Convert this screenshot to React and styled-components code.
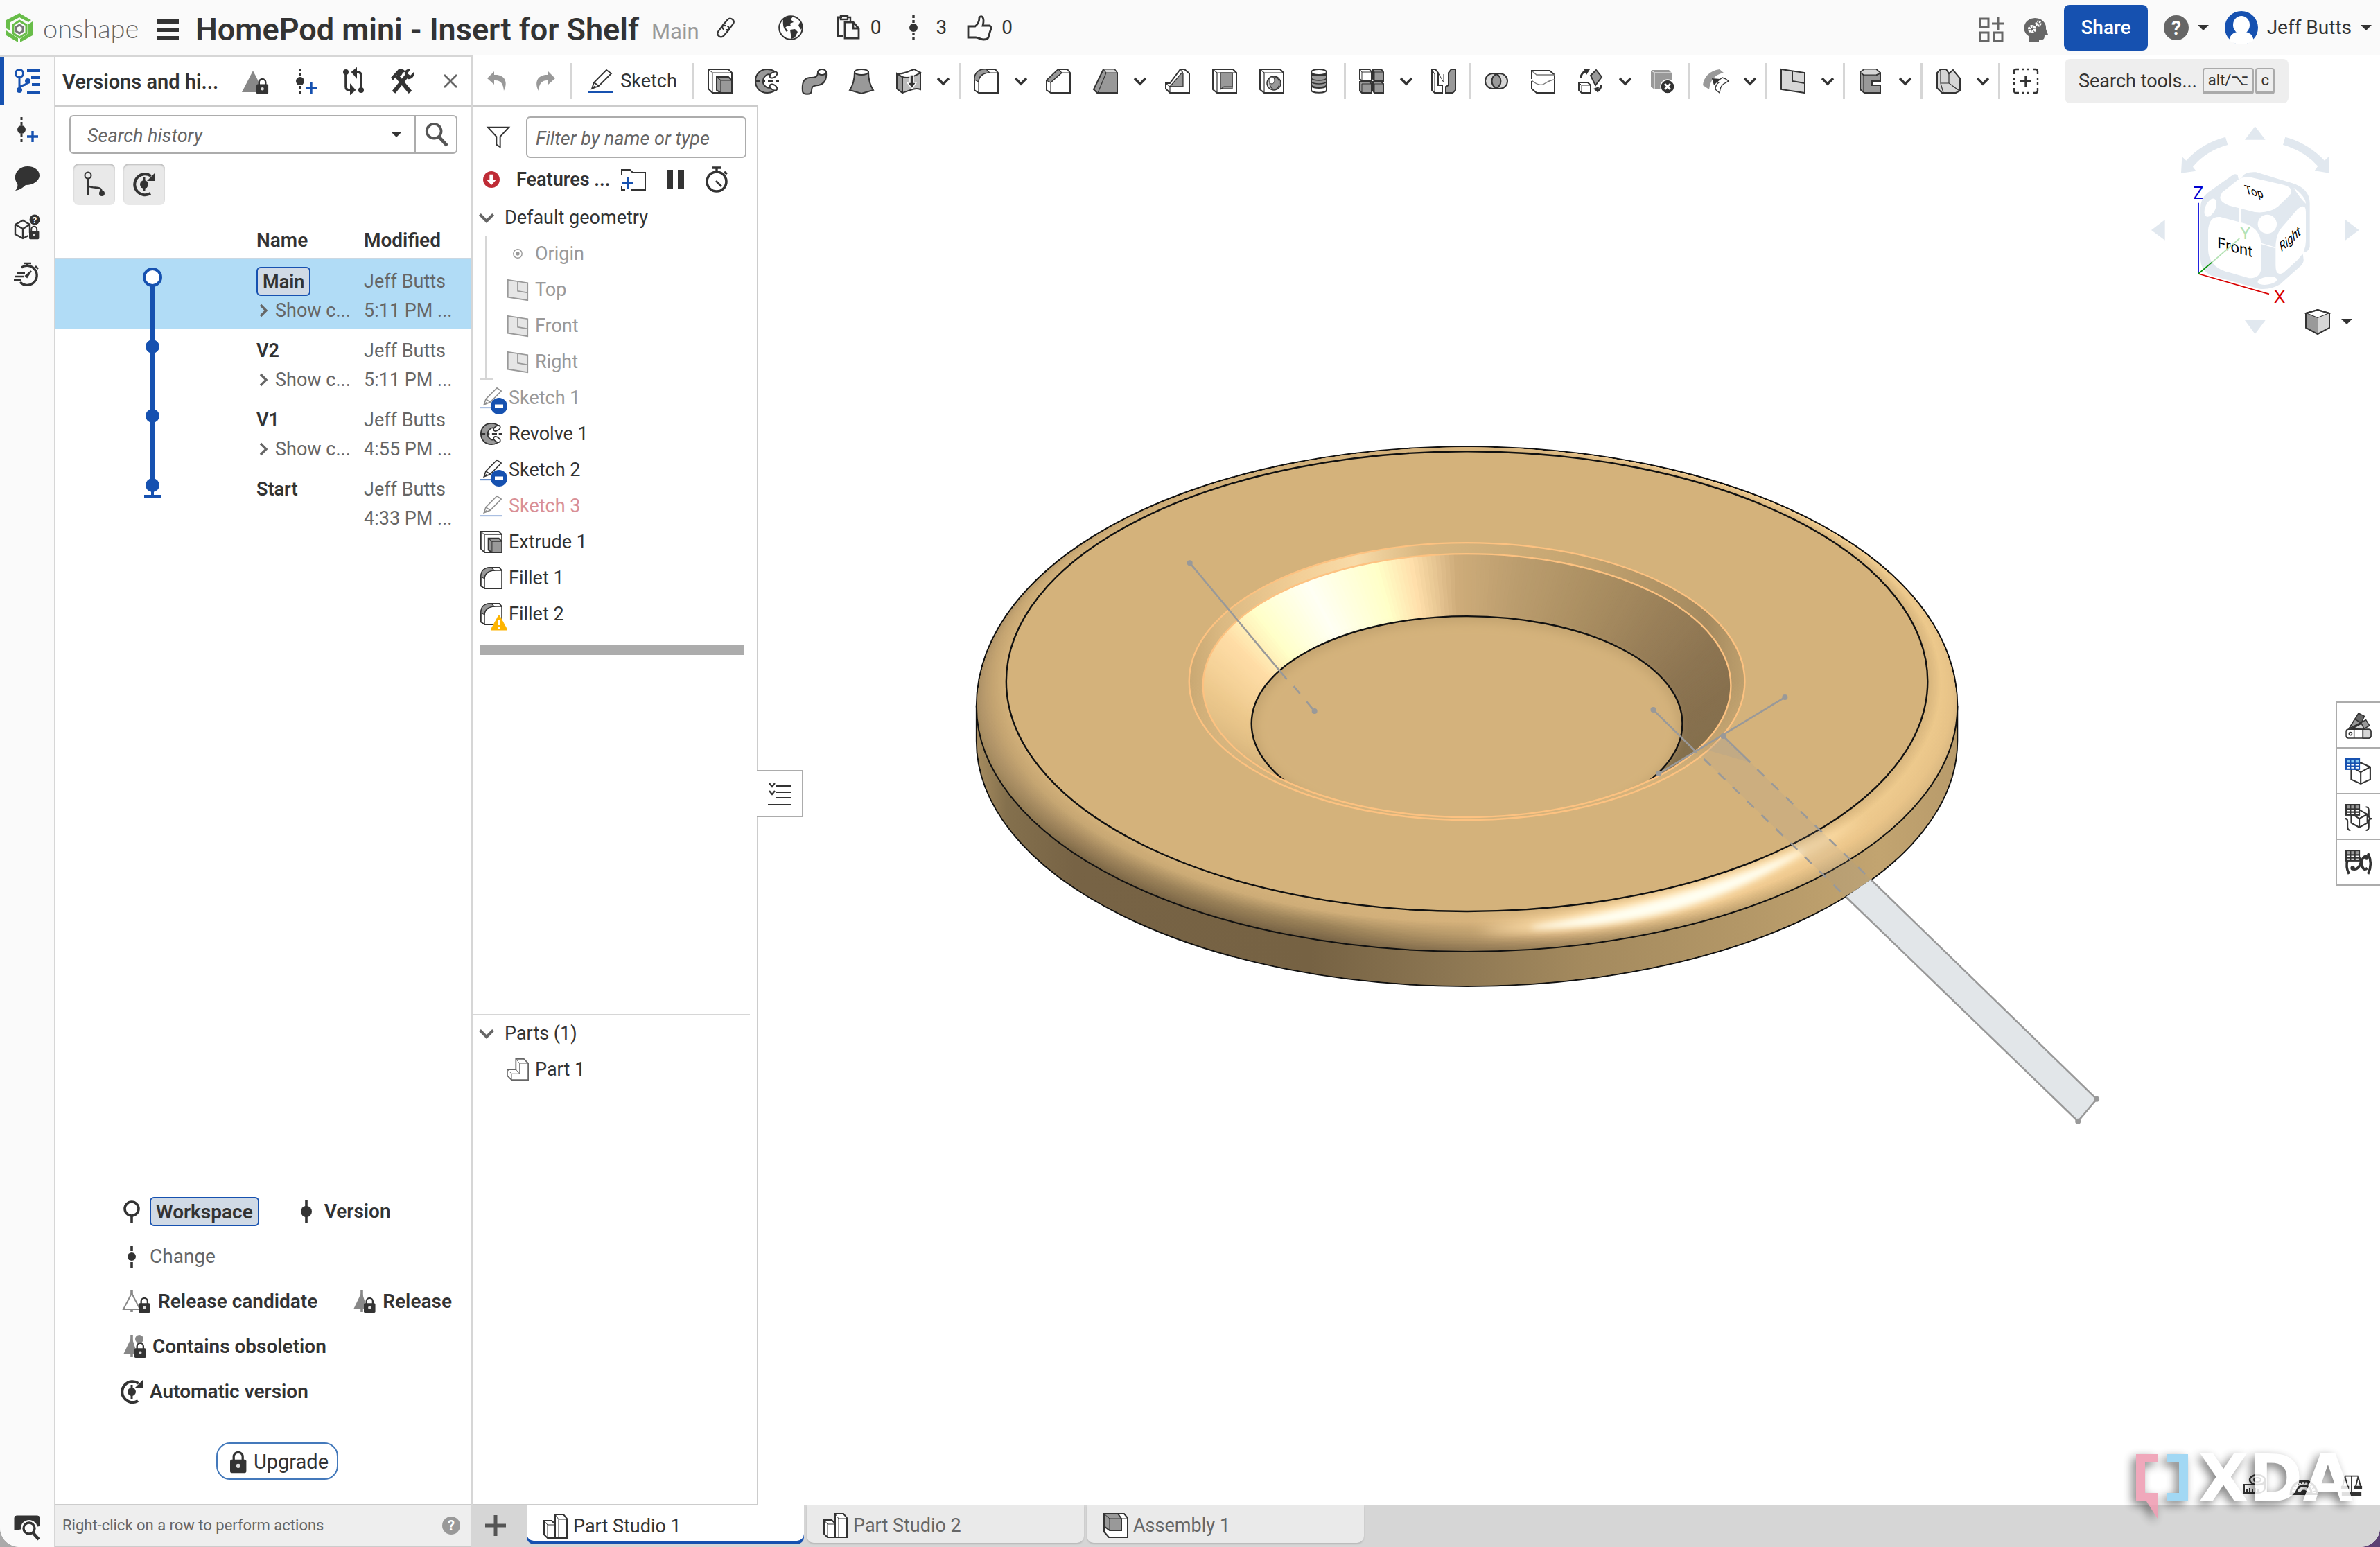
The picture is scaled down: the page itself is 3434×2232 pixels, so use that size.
import React, { useState } from 'react'
import styled, { createGlobalStyle } from 'styled-components'

const ink = '#333'
const blue = '#1651b0'

const lock = (x, y, s = 1) => (
  <g transform={`translate(${x} ${y}) scale(${s})`} stroke="none">
    <path d="M4 10V6a5 5 0 0 1 10 0v4" fill="none" stroke={ink} strokeWidth="2.5" />
    <rect x="0" y="9" width="18" height="15" rx="2" fill={ink} />
    <circle cx="9" cy="16" r="2.4" fill="#ddd" />
  </g>
)

const grid = (color, head) => (
  <g stroke="none">
    <rect x="0" y="0" width="20" height="16" fill={color} />
    {[2, 8, 14].map((x) => <rect key={x} x={x} y="2" width="4" height="4" fill={head} />)}
    {[2, 8, 14].map((x) => <path key={x} d={`M${x} 8h4v2h-4zM${x} 12h4v2h-4z`} fill="#fff" />)}
  </g>
)

// every drawing uses a 36 x 36 box
const icons = {
  extrude: <><path d="M1 1h29l5 5v29H7l-6-6z" fill="#fff" /><path d="M1 1l6 5h28M7 6v29" strokeWidth="1" /><path d="M13 12h17l5 5v18H19l-6-4z" fill="#999" /><path d="M13 12l6 5h16M19 17v18" strokeWidth="1.2" /></>,
  revolve: <><path d="M32 8C29 3 23 1 18 1 8 1 1 8 1 18s7 17 17 17c5 0 11-2 14-7-2-4-6-3-9-1-2 1-5 1-7-1-6-4-5-12 0-16 2-2 5-2 7-1 4 3 8 2 9-1z" fill="#999" /><ellipse cx="27" cy="9" rx="6" ry="3.6" transform="rotate(-35 27 9)" fill="#fff" /><ellipse cx="27" cy="27" rx="6" ry="3.6" transform="rotate(35 27 27)" fill="#fff" /><path d="M0 18h8M12 18h3M19 18h8M30 18h5" strokeWidth="2" /></>,
  sweep: <><path d="M1 33c-1-12 1-19 10-20 9 0 12-1 12-8l12 0c1 10-2 17-11 19-8 1-10 1-10 9-1 5-12 5-13 0z" fill="#999" /><ellipse cx="29" cy="5" rx="6" ry="4" fill="#fff" /></>,
  loft: <><path d="M8 5C8 18 5 25 1 31l17 5 17-5c-4-6-7-13-7-26z" fill="#999" /><ellipse cx="18" cy="5" rx="10" ry="4" fill="#fff" /></>,
  thicken: <><path d="M1 7l8 5v23l-8-6z" fill="#999" /><path d="M9 12c8 3 16-1 26-6v24c-9-3-16 2-26 5z" fill="#bbb" /><path d="M1 7C9 9 17 4 26 1l9 5c-9 5-17 9-26 6z" fill="#fff" /><path d="M20 9h5v11h4l-6 9-7-9h4z" fill={ink} stroke="#fff" strokeWidth="1.5" /></>,
  fillet: <><path d="M7 35l-6-4V16C1 6 7 1 16 1h15l4 5v29z" fill="#fff" /><path d="M1 16C1 6 7 1 16 1h2l5 5c-9 0-16 6-16 13z" fill="#999" strokeWidth="1.2" /><path d="M7 35V19C7 10 13 6 23 6h12" strokeWidth="1.2" /></>,
  chamfer: <><path d="M7 35l-6-4V17L18 1h13l4 5v29z" fill="#fff" /><path d="M1 17L18 1l5 5L7 20z" fill="#999" strokeWidth="1.2" /><path d="M7 35V20L23 6h12" strokeWidth="1.2" /></>,
  draft: <><path d="M1 30L15 1h16l4 5v29H6z" fill="#999" /><path d="M15 1h16l4 5H19z" fill="#d6d6d6" strokeWidth="1.2" /><path d="M19 6L7 35" strokeWidth="1.2" /></>,
  rib: <><path d="M1 21h6L22 1h6l7 6v28H7l-6-6z" fill="#fff" /><path d="M7 26L25 5v21z" fill="#999" strokeWidth="1.2" /><path d="M22 1l4 6v19H7v9M1 21l6 5" strokeWidth="1.2" /></>,
  shell: <><path d="M1 1h29l5 5v29H7l-6-5z" fill="#fff" /><path d="M12 6h17v23H12z" fill="#999" strokeWidth="1.2" /><path d="M29 6v20l-12 0-5 4M1 1l6 5v29M7 6h28" strokeWidth="1.2" /></>,
  hole: <><path d="M1 1h29l5 5v29H7l-6-5z" fill="#fff" /><path d="M1 1l6 5h28M7 6v29" strokeWidth="1.2" /><ellipse cx="21" cy="21" rx="10" ry="10" fill="#d6d6d6" strokeWidth="1.5" /><ellipse cx="22" cy="21" rx="7" ry="9" fill="#999" strokeWidth="1.2" /><ellipse cx="18" cy="17" rx="4" ry="5" fill="#fff" strokeWidth="1" /></>,
  thread: <><path d="M7 5v26c0 5 22 5 22 0V5z" fill="#fff" /><path d="M7 9v16c4 4 18 4 22 0V9z" fill="#999" /><path d="M7 14c4 4 18 4 22 0M7 19c4 4 18 4 22 0M7 24c4 4 18 4 22 0" strokeWidth="1.4" /><ellipse cx="18" cy="5" rx="11" ry="4" fill="#fff" /></>,
  pattern: <><path d="M1 1h14l3 4v13H4l-3-3z" fill="#fff" /><path d="M20 1h12l3 4v13H22l-2-3zM1 19h14l3 3v13H4l-3-3zM20 19h12l3 3v13H22l-2-3z" fill="#999" /><path d="M1 1l3 4h14M4 5v12M20 1l2 4h13M22 5v12M4 22h14M22 22h13M4 22v12M22 22v12" strokeWidth="1" /></>,
  mirror: <><path d="M1 1h5l4 5v18h6v11H5l-4-4z" fill="#fff" /><path d="M35 1h-6l-4 5v18l-4 2v9h10l4-4z" fill="#999" /><path d="M10 6l8 14V8M5 35V8L1 1" strokeWidth="1" /></>,
  boolean: <><circle cx="13" cy="18" r="11" fill="#d6d6d6" /><circle cx="23" cy="18" r="11" fill="#d6d6d6" /><path d="M18 8a11 11 0 0 1 0 20 11 11 0 0 1 0-20z" fill="#999" /></>,
  split: <><path d="M1 15V3h26l7 6v26H8l-7-6V18" fill="#fff" /><path d="M1 3l7 6h26M1 17c7 6 13 8 18 5s9-6 16-6" stroke="#777" strokeWidth="1.4" /></>,
  transform: <><path d="M18 10L26 2l8 10-9 12z" fill="#999" /><path d="M1 20h13l4 4v11H5l-4-4z" fill="#fff" /><path d="M1 20l4 4h13M5 24v11" strokeWidth="1" /><path d="M4 14C4 8 7 5 11 4M33 24c0 4-2 7-6 8" strokeWidth="3" /><path d="M8 0l9 1-5 8zM22 29l8-3-1 9z" fill={ink} stroke="none" /></>,
  remove: <><path d="M1 2h26l4 4v24H6l-5-4z" fill="#999" stroke="none" /><path d="M1 2l5 4h25M6 6v24" stroke="#fff" strokeWidth="1" /><circle cx="25" cy="26" r="10" fill={ink} stroke="#fff" strokeWidth="1.4" /><path d="M21 22l8 8M29 22l-8 8" stroke="#fff" strokeWidth="2.6" /></>,
  modify: <><path d="M0 24C1 12 10 3 24 1l6 5C17 9 11 16 9 30z" fill="#999" stroke="none" /><path d="M20 19l8-6c4 1 6 2 9 5l-7 4c-4 3-5 6-6 13l-6-5c0-5 2-8 5-10z" fill="#fff" strokeWidth="1.4" /><path d="M13 14l12 1-9 9z" fill={ink} stroke="none" /></>,
  plane: <><path d="M1 1l34 5v29L1 30z" fill="#d6d6d6" /><path d="M17 3v15l18 3" /></>,
  frame: <><path d="M3 5l6-4h17l6 5v12h-12v6h12v11H9l-6-5z" fill="#999" /><path d="M3 5l5 5h18l6-3M9 1l-6 4M8 10v24" fill="none" strokeWidth="1.2" /><path d="M3 5l6-4h17l6 5-6 3H8z" fill="#d6d6d6" strokeWidth="1.2" /></>,
  sheet: <><path d="M2 6l5-5h8l4 6 6-5 10 12v18l-6 3H9l-7-7z" fill="#d6d6d6" /><path d="M19 7v14l15 11M7 1v20L19 21M7 21l4 14" strokeWidth="1.2" /></>,
  addTool: <><path d="M1 8V4q0-3 3-3h4M28 1h4q3 0 3 3v4M35 28v4q0 3-3 3h-4M8 35H4q-3 0-3-3v-4M13 1h3M20 1h3M13 35h3M20 35h3M1 13v3M1 20v3M35 13v3M35 20v3" strokeWidth="2.4" /><path d="M18 10v16M10 18h16" strokeWidth="3.4" /></>,
  sketch: <><path d="M6 29L9 20 27 2l7 5L16 25 6 29zM9 20l7 5M6 29l5-4" fill="#fff" strokeWidth="1.8" /><path d="M0 34h36" stroke={blue} strokeWidth="2" /></>,
  sketchDim: <g opacity=".55"><path d="M6 29L9 20 27 2l7 5L16 25 6 29zM9 20l7 5M6 29l5-4" fill="#fff" strokeWidth="1.8" /><path d="M0 34h36" stroke={blue} strokeWidth="2" /></g>,
  undo: <path d="M13 4L3 14l10 9v-6c9-1 13 4 14 15 7-14 0-24-14-23z" fill="#999" stroke="none" />,
  redo: <path d="M23 4l10 10-10 9v-6C14 16 10 21 9 32 2 18 9 8 23 9z" fill="#999" stroke="none" />,
  origin: <><circle cx="18" cy="18" r="7" stroke="#999" strokeWidth="1.6" /><circle cx="18" cy="18" r="3" fill="#999" stroke="none" /></>,
  planeDim: <g stroke="#999"><path d="M2 2l32 5v28L2 30z" fill="#e6e6e6" /><path d="M18 5v15l16 3" /></g>,
  part: <><path d="M1 18h14V1h13l7 7v27H8l-7-7z" fill="#fff" stroke="#666" /><path d="M15 1l6 7h14M1 18l7 7h13V8M15 18l6 7M8 25v10" stroke="#666" strokeWidth="1" /></>,
  partStudio: <><path d="M1 10h11l5 5v20H6l-5-5z" fill="#fff" /><path d="M17 1h12l5 6v28H17z" fill="#fff" /><path d="M17 1l5 7h12M22 8v27M1 10l5 6h10M6 16v19" strokeWidth="1" /></>,
  assembly: <><path d="M1 1h29l5 6v28H8l-7-8z" fill="#fff" /><path d="M1 1h20l5 7v17H9l-8-6z" fill="#999" /><path d="M9 8h26M9 8v17M1 1l8 7" strokeWidth="1" /></>,
  historyTree: <g stroke={blue}><circle cx="7" cy="7" r="5.5" strokeWidth="3" /><path d="M7 13v18M7 29c0-7 12-3 12-11" strokeWidth="3" /><circle cx="7" cy="31" r="4" fill={blue} stroke="none" /><circle cx="19" cy="18" r="4" fill={blue} stroke="none" /><path d="M18 3h18M24 13h12M25 23h11M18 34h18" strokeWidth="4" /></g>,
  versionAdd: <><path d="M10 0v4M10 7v4M10 25v4M10 32v4" strokeWidth="3" /><circle cx="10" cy="18" r="6" fill={ink} stroke="none" /><path d="M26 20v16M18 28h16" stroke={blue} strokeWidth="3.4" /></>,
  comment: <path d="M1 36c3-3 4-7 3-10C-4 15 4 1 19 1c10 0 17 6 17 13s-8 14-20 14C12 32 7 35 1 36z" fill={ink} stroke="none" />,
  cubeHelp: <><path d="M1 15l11-6 10 6v12M1 15v14l11 6 8-4M1 15l11 6 10-6M12 21v14" strokeWidth="2.4" /><circle cx="29" cy="8" r="7.5" fill={ink} stroke="none" /><text x="29" y="13" textAnchor="middle" fontSize="13" fontWeight="700" fill="#fff" stroke="none">?</text>{lock(21, 17, 0.8)}</>,
  speed: <><path d="M10 7a14 14 0 1 1-2 21" strokeWidth="3.4" /><path d="M13 1h11M18 1v5M30 5l4 4M3 15h12M1 20h12M-1 25h11" strokeWidth="2.6" /><path d="M24 12l-8 7 2 2z" fill={ink} /></>,
  layers: <><path d="M0 22V4q0-3 3-3h30q3 0 3 3v12" fill={ink} strokeWidth="1" /><circle cx="21" cy="19" r="12" fill="#fafafa" stroke="none" /><circle cx="21" cy="19" r="8" strokeWidth="3.4" /><path d="M27 26l8 9" strokeWidth="4.4" /></>,
  releaseLock: <><path d="M16 3L0 34h32z" fill="#888" stroke="none" />{lock(21, 14, 0.95)}</>,
  compare: <><path d="M7 6v20q0 5 5 5h3M29 30V10q0-5-5-5h-3" strokeWidth="3.6" /><path d="M14 24l6 7-6 5zM22 0l-6 5 6 7z" fill={ink} /><circle cx="7" cy="5" r="4" fill={ink} stroke="none" /><circle cx="29" cy="31" r="4" fill={ink} stroke="none" /></>,
  tools: <><path d="M6 34L26 9M10 10l20 24" strokeWidth="6" /><path d="M2 13L13 1c5-1 8 0 11 4-6-1-5 4-8 6l-5-2-6 8z" fill={ink} stroke="none" /><path d="M22 8c-1-5 3-8 8-7l-4 6 4 3 5-5c2 6-3 11-9 10z" fill={ink} stroke="none" /></>,
  close: <path d="M9 9l18 18M27 9L9 27" stroke="#666" strokeWidth="2.6" />,
  search: <g stroke="#555"><circle cx="15" cy="13" r="11" strokeWidth="4" /><path d="M22 21l13 14" strokeWidth="5" /></g>,
  branch: <><circle cx="9" cy="5" r="4.5" strokeWidth="2" /><path d="M9 10v24M9 20c9 6 19-2 20 10" strokeWidth="2.6" /><circle cx="29" cy="31" r="4" fill={ink} stroke="none" /></>,
  auto: <><path d="M27 31A15 15 0 1 1 28 6" strokeWidth="4" /><path d="M34 1v12H22z" fill={ink} stroke="none" /><path d="M18 8v20" strokeWidth="3" /><circle cx="18" cy="18" r="6" fill={ink} stroke="none" /></>,
  workspace: <><circle cx="18" cy="14" r="10" strokeWidth="3.6" /><path d="M18 24v11" strokeWidth="3.6" /></>,
  version: <><path d="M18 2v32" strokeWidth="3.6" /><circle cx="18" cy="18" r="8" fill={ink} stroke="none" /></>,
  change: <><path d="M18 2v8M18 26v8" strokeWidth="3.6" /><circle cx="18" cy="18" r="6" fill={ink} stroke="none" /></>,
  commits: <><path d="M18 0v4M18 7v4M18 25v4M18 32v4" strokeWidth="3.4" /><circle cx="18" cy="18" r="6" fill={ink} stroke="none" /></>,
  candidate: <><path d="M18 1v6M18 28v5" stroke="#888" strokeWidth="3.6" /><path d="M18 6L6 29h24z" stroke="#888" strokeWidth="2" fill="#fff" />{lock(28, 12, 0.92)}</>,
  release: <><path d="M14 1v32" stroke="#888" strokeWidth="3.6" /><path d="M14 4L2 29h20z" fill="#888" stroke="none" />{lock(17, 12, 0.92)}</>,
  obsolete: <><path d="M18 1v32" stroke="#888" strokeWidth="3.6" /><path d="M18 4L6 29h20z" fill="#888" stroke="none" /><circle cx="29" cy="7" r="6" fill="#888" stroke="none" />{lock(22, 12, 0.92)}</>,
  lock: <>{lock(6, 3, 1.3)}</>,
  help: <><circle cx="18" cy="18" r="18" fill="#666" stroke="none" /><text x="18" y="28" textAnchor="middle" fontSize="28" fontWeight="700" fill="#fff" stroke="none">?</text></>,
  helpDim: <><circle cx="18" cy="18" r="18" fill="#999" stroke="none" /><text x="18" y="28" textAnchor="middle" fontSize="28" fontWeight="700" fill="#fff" stroke="none">?</text></>,
  filter: <path d="M1 2h34L21 17v17l-6-4V17z" fill="#fff" strokeWidth="2.2" />,
  rollback: <><circle cx="18" cy="18" r="18" fill="#bf2c36" stroke="none" /><path d="M14 7h8v12h6L18 30 8 19h6z" fill="#fff" stroke="none" /></>,
  folderAdd: <><path d="M1 12V4h12l4 4h18v25H14M1 28v5h5" strokeWidth="2" /><path d="M10 15v16M2 23h16" stroke={blue} strokeWidth="3.6" /></>,
  pause: <path d="M6 4h9v28H6zM22 4h9v28h-9z" fill={ink} stroke="none" />,
  timer: <><circle cx="18" cy="21" r="14" strokeWidth="3.6" /><path d="M12 1h12M18 1v5M29 7l4 3" strokeWidth="3.4" /><path d="M17 20l8 8" strokeWidth="2.8" /></>,
  list: <><path d="M13 7h21M13 16h21M13 24h21M1 34h33" strokeWidth="2.2" /><path d="M3 3l4 5 4-5M3 14l4 5 4-5" strokeWidth="2.2" /></>,
  link: <g strokeWidth="2.6"><path d="M15 21c-4-3-3-6 0-9l6-7c5-5 13 1 9 7l-6 8c-2 2-4 2-6 1" /><path d="M21 15c4 3 3 6 0 9l-6 7c-5 5-13-1-9-7l6-8c2-2 4-2 6-1" /></g>,
  globe: <><circle cx="18" cy="18" r="16.8" fill="#fff" /><path d="M7 6c5-4 9-5 14-4l-3 4 4 4-5 2 1 4-5-1-3 3 4 4-2 2c-4-4-6-9-5-18zM17 21l7-1 4 4-4 8-5 2-1-6zM32 8l3 8-2 5-4-6z" fill={ink} stroke="none" /></>,
  copy: <><path d="M9 3H3v27h8" strokeWidth="2.8" /><path d="M7 1h10v5H7zM21 8V3h-4" strokeWidth="2.4" /><path d="M13 10h12l8 9v14H13zM25 10v9h8" strokeWidth="2.8" /></>,
  like: <path d="M2 16h10c4-3 6-7 6-13 4-4 8 1 5 12h10c3 2 2 5 1 7l-3 10c-1 2-4 3-7 3-5 0-7-3-11-3H2z" strokeWidth="2.8" />,
  apps: <g stroke="#666" strokeWidth="3"><path d="M2 2h12v12H2zM2 22h12v12H2zM22 22h12v12H22zM28 0v18M19 9h17" /></g>,
  mind: <><path d="M8 36V27C-3 20 0 2 17 1c12 0 17 9 16 16l3 8-5 1c0 6-2 7-8 6v4z" fill="#666" stroke="none" /><circle cx="13" cy="17" r="4" stroke="#fff" strokeWidth="4" strokeDasharray="3 1" /><circle cx="22" cy="9" r="3" stroke="#fff" strokeWidth="3" strokeDasharray="2 1" /></>,
  palette: <g strokeWidth="1.4"><path d="M5 22L18 1l8 4-4 9" fill="#666" /><path d="M5 22l8-13 8 5z" fill="#999" /><path d="M8 22l20-12 5 8-9 5z" fill="#999" /><path d="M10 22l12-7 4 8z" fill="#d6d6d6" /><rect x="1" y="23" width="34" height="12" rx="3" fill="#fff" /><path d="M24 23h8q3 0 3 3v6q0 3-3 3h-8z" fill="#d6d6d6" /><path d="M12 23v12M24 23v12" /><circle cx="7" cy="29" r="2" /></g>,
  bomTable: <><path d="M8 12l13-6 13 6v17l-13 6-13-6zM8 12l13 7 13-7M21 19v16" fill="#fff" />{grid(blue, '#8ccbf2')}</>,
  configTable: <><path d="M8 13l11-5 11 6v12l-11 6-11-6zM8 13l11 7 11-6M19 20v12" fill="#fff" /><path d="M7 36q-4 0-4-5v-7q0-4-3-4M28 4q4 0 4 5v7q0 4 4 4-4 0-4 4v7q0 5-4 5" />{grid(ink, '#999')}</>,
  variableTable: <><path d="M12 12c5-3 9-1 10 6l1 4c1 5 4 6 7 3M30 9c-5-1-7 4-9 9-2 6-5 10-11 8" strokeWidth="3.6" /><circle cx="29" cy="11" r="3" fill={ink} stroke="none" /><circle cx="10" cy="25" r="3" fill={ink} stroke="none" /><path d="M5 33q-5-9-2-20M31 5q7 14 0 28" strokeWidth="3.4" />{grid(ink, '#999')}</>,
  shaded: <><path d="M1 6l17-5 17 5-17 7z" fill="#fff" /><path d="M1 6l17 7v22L1 27z" fill="#999" stroke="none" /><path d="M35 6l-17 7v22l17-8z" fill="#d6d6d6" stroke="none" /><path d="M1 6l17-5 17 5v21l-17 9-17-9z" /></>,
  tape: <><path d="M2 20h20c7 0 10-2 10-5v10c0 4-5 7-10 7H2z" fill="#fff" /><ellipse cx="21" cy="13" rx="11" ry="7" fill="#fff" strokeWidth="2.4" /><ellipse cx="21" cy="13" rx="5" ry="3" /><path d="M6 31v-4M10 31v-6M14 31v-4M18 31v-6M22 31v-4" /></>,
  protractor: <><path d="M1 32a17 17 0 0 1 34 0zM8 31a10 10 0 0 1 20 0z" strokeWidth="2.8" /><path d="M4 31a14 14 0 0 1 28 0" strokeDasharray="1.5 3" strokeWidth="3" /><path d="M15 31a3 3 0 0 1 6 0" strokeWidth="3" /></>,
  scale: <><path d="M4 33h28M18 8v24M8 7h20M8 8L4 24M8 8l4 16M28 8l-4 16M28 8l4 16" strokeWidth="2" /><path d="M3 23h10v3H3zM23 23h10v3H23zM4 32h28v4H4z" fill={ink} /></>,
}

const Icon = ({ name, size = 36, wide = 0 }) => (
  <Drawing viewBox={`0 0 ${36 + wide} 36`} width={size + wide} height={size} aria-hidden="true">{icons[name]}</Drawing>
)

const Caret = () => (
  <Drawing viewBox="0 0 16 8" width="16" height="8" aria-hidden="true"><path d="M0 0h16L8 8z" fill={ink} stroke="none" /></Drawing>
)

const Chevron = ({ color = ink, size = 20, turn }) => (
  <Drawing viewBox="0 0 20 12" width={size} height={size * 0.6} $turn={turn} aria-hidden="true"><path d="M2 2l8 8 8-8" stroke={color} strokeWidth="3.4" /></Drawing>
)

const tools = [
  ['extrude'], ['revolve'], ['sweep'], ['loft'], ['thicken', true], null,
  ['fillet', true], ['chamfer'], ['draft', true], ['rib'], ['shell'], ['hole'], ['thread'], null,
  ['pattern', true], ['mirror'], null,
  ['boolean'], ['split'], ['transform', true], ['remove'], null,
  ['modify', true], null, ['plane', true], null, ['frame', true], null, ['sheet', true], null, ['addTool'],
]

const versions = [
  { name: 'Main', time: '5:11 PM ...', current: true },
  { name: 'V2', time: '5:11 PM ...' },
  { name: 'V1', time: '4:55 PM ...' },
  { name: 'Start', time: '4:33 PM ...', last: true },
]

const geometry = [['Origin', 'origin'], ['Top', 'planeDim'], ['Front', 'planeDim'], ['Right', 'planeDim']]

const features = [
  { name: 'Sketch 1', icon: 'sketchDim', color: '#999', badge: 'minus' },
  { name: 'Revolve 1', icon: 'revolve' },
  { name: 'Sketch 2', icon: 'sketch', badge: 'minus' },
  { name: 'Sketch 3', icon: 'sketchDim', color: '#d98f95' },
  { name: 'Extrude 1', icon: 'extrude' },
  { name: 'Fillet 1', icon: 'fillet' },
  { name: 'Fillet 2', icon: 'fillet', badge: 'warn' },
]

const tabs = [['Part Studio 1', 'partStudio'], ['Part Studio 2', 'partStudio'], ['Assembly 1', 'assembly']]
const sideTools = [['Appearance', 'palette'], ['Bill of materials', 'bomTable'], ['Configurations', 'configTable'], ['Variables', 'variableTable']]

/* ---- shaded part ---- */

const hex = (c) => [1, 3, 5].map((i) => parseInt(c.slice(i, i + 2), 16))
const mix = (a, b, t) => `#${hex(a).map((v, i) => Math.round(v + (hex(b)[i] - v) * t).toString(16).padStart(2, '0')).join('')}`
const ramp = (stops, v) => {
  const i = stops.findIndex(([s]) => s >= v)
  if (i === -1) return stops[stops.length - 1][1]
  if (i === 0) return stops[0][1]
  const [a, ca] = stops[i - 1]
  const [b, cb] = stops[i]
  return mix(ca, cb, (v - a) / (b - a))
}

const base = '#d4b27b'
// colours across the width of the rounded rim, for tube angles 0, 30, 60 and 90
const rimRamps = [
  [0, [[0, base], [1, base]]],
  [30, [[0, '#c4a471'], [0.15, '#c9a974'], [0.5, '#d6b27c'], [0.66, '#efcb93'], [0.8, '#f2cd92'], [1, '#ecc88b']]],
  [60, [[0, '#b3966a'], [0.12, '#9c8259'], [0.35, '#9a8158'], [0.5, '#b89a6a'], [0.6, '#d6b07c'], [0.75, '#f0cb92'], [0.9, '#ecc68a'], [1, '#e6c287']]],
  [90, [[0, '#a58b5f'], [0.1, '#7d6847'], [0.35, '#776345'], [0.5, '#8b7451'], [0.65, '#a98e62'], [0.8, '#c4a571'], [0.92, '#dab881'], [1, '#dab881']]],
]
const rimColor = (phi, x) => {
  const i = Math.min(2, Math.floor(phi / 30))
  return mix(ramp(rimRamps[i][1], x), ramp(rimRamps[i + 1][1], x), (phi - i * 30) / 30)
}
const rimAngles = Array.from({ length: 31 }, (_, i) => 90 - i * 3)
const rimStops = [0, 0.05, 0.1, 0.2, 0.35, 0.5, 0.6, 0.66, 0.75, 0.8, 0.9, 1]

const wallRamp = [
  [-90, base], [-50, '#a3885e'], [-30, '#84704d'], [0, '#87704e'], [20, '#8d7552'], [40, '#9a8059'], [60, '#ab8f62'],
  [78, '#bb9d6e'], [92, '#ceac7a'], [102, '#ffdfab'], [110, '#ffffc8'], [127, '#fffff4'], [144, '#ffffc8'],
  [156, '#ffdda6'], [180, '#ecc88c'], [215, base], [270, base],
]
const wedges = Array.from({ length: 360 }, (_, i) => i - 90)
const onEllipse = (rx, ry, cy, deg) => {
  const a = (deg * Math.PI) / 180
  return `${(2116 + rx * Math.cos(a)).toFixed(1)} ${(cy - ry * Math.sin(a)).toFixed(1)}`
}

const Scene = () => (
  <SceneSvg viewBox="1093 152 2341 2020" preserveAspectRatio="xMidYMid meet" role="img" aria-label="Part 1">
    <defs>
      {rimAngles.map((phi) => (
        <linearGradient key={phi} id={`rim${phi}`}>
          {rimStops.map((s) => <stop key={s} offset={s} stopColor={rimColor(phi, s)} />)}
        </linearGradient>
      ))}
      <linearGradient id="side">
        {[[0, '#a58b5f'], [0.03, '#84704d'], [0.1, '#776345'], [0.34, '#766243'], [0.48, '#8c7652'], [0.62, '#a48a5e'], [0.78, '#b39767'], [0.92, '#c2a470'], [1, '#b89b6b']].map(([o, c]) => <stop key={o} offset={o} stopColor={c} />)}
      </linearGradient>
      <linearGradient id="lip">
        {[[0, '#c9a873'], [0.06, '#dbb982'], [0.2, '#f3cf97'], [0.3, '#f8dba8'], [0.42, '#d8b680'], [0.7, '#c5a571'], [0.93, '#a58a5f'], [1, '#bd9f6d']].map(([o, c]) => <stop key={o} offset={o} stopColor={c} />)}
      </linearGradient>
      <linearGradient id="lipFade" x1="0" y1="0" x2="0" y2="1">
        <stop offset=".5" stopColor={base} stopOpacity="0" />
        <stop offset=".85" stopColor={base} />
      </linearGradient>
      <clipPath id="bowl"><ellipse cx="2116" cy="989" rx="381" ry="190" /></clipPath>
      <filter id="glow" x="-20%" y="-50%" width="140%" height="200%"><feGaussianBlur stdDeviation="8" /></filter>
      <filter id="core" x="-20%" y="-50%" width="140%" height="200%"><feGaussianBlur stdDeviation="5" /></filter>
      <filter id="soft" x="-20%" y="-20%" width="140%" height="140%"><feGaussianBlur stdDeviation="7" /></filter>
    </defs>

    <path d="M1408 1019V1069A708 354 0 0 0 2824 1069V1019z" fill="url(#side)" stroke="#111" strokeWidth="2" />
    <ellipse cx="2116" cy="1019" rx="665" ry="332" fill="none" stroke="#111" strokeWidth="88" />
    <path d="M1409 1019V1069A707 353 0 0 0 2823 1069V1019z" fill="url(#side)" />
    {rimAngles.map((phi) => {
      const a = (phi * Math.PI) / 180
      return <ellipse key={phi} cx="2116" cy={1019 - 36 * Math.cos(a)} rx={664 + 43 * Math.sin(a)} ry={332 + 21.5 * Math.sin(a)} fill={`url(#rim${phi})`} />
    })}
    <path d="M2130 1342Q2430 1364 2690 1180Q2425 1302 2130 1342z" fill="#ffe0ac" filter="url(#glow)" />
    <path d="M2210 1338Q2430 1338 2600 1228Q2425 1304 2210 1338z" fill="#fffff2" stroke="#fffff2" strokeWidth="3" filter="url(#core)" />
    <path d="M1408 1019A708 354 0 0 0 2824 1019" fill="none" stroke="#111" strokeWidth="2" />
    <ellipse cx="2116" cy="983" rx="665" ry="332" fill={base} stroke="#111" strokeWidth="2.4" />

    <ellipse cx="2116" cy="983" rx="401" ry="200" fill="url(#lip)" />
    <ellipse cx="2116" cy="983" rx="401" ry="200" fill="url(#lipFade)" />
    <g clipPath="url(#bowl)">
      {wedges.map((d) => {
        const c = ramp(wallRamp, d)
        return <path key={d} d={`M${onEllipse(383, 192, 989, d)}L${onEllipse(383, 192, 989, d + 1)}L${onEllipse(308, 153, 1044, d + 1)}L${onEllipse(308, 153, 1044, d)}z`} fill={c} stroke={c} strokeWidth="2" />
      })}
      <ellipse cx="2116" cy="1044" rx="311" ry="155" fill="#c4a470" />
      <ellipse cx="2116" cy="1048" rx="304" ry="150" fill={base} filter="url(#soft)" />
      <ellipse cx="2116" cy="1044" rx="311" ry="155" fill="none" stroke="#111" strokeWidth="2.4" />
    </g>
    <ellipse cx="2116" cy="989" rx="381" ry="190" fill="none" stroke="#fdc281" strokeWidth="2.4" />
    <ellipse cx="2116" cy="983" rx="401" ry="200" fill="none" stroke="#fdc281" strokeWidth="2.4" />

    <g stroke="#999" strokeWidth="2.6" fill="none">
      <path d="M2699 1269L3025 1586 2998 1618 2663 1294z" fill="#e2e6e9" stroke="none" />
      <path d="M2486 1062L2699 1269 2663 1294 2455 1092z" fill="#999" fillOpacity=".14" stroke="none" />
      <path d="M2486 1062L2525 1100 2462 1082z" fill="#999" fillOpacity=".2" stroke="none" />
      <path d="M1716 812L1856 980M2575 1006L2393 1116M2385 1024L2448 1086M2486 1062L2525 1100M2699 1269L3025 1586 2998 1618 2663 1294" />
      <path d="M1866 990L1896 1026M2458 1095L2663 1294M2535 1110L2699 1269" strokeDasharray="14 15" />
    </g>
    {[[1716, 812], [1896, 1026], [2385, 1024], [2575, 1006], [2393, 1116], [2486, 1062], [3025, 1586], [2998, 1618]].map(([x, y]) => <circle key={x} cx={x} cy={y} r="4" fill="#999" />)}
  </SceneSvg>
)

const ViewCube = () => (
  <CubeSvg viewBox="0 0 1182 1020" width="394" height="340" role="img" aria-label="View cube">
    <g fill="#e1e8ef">
      <path d="M641 67l45 58h-89zM641 966l45-60h-89zM192 516l59-45v89zM1091 516l-59-45v89z" />
      <path d="M513 113l10 34Q430 172 372 242l14 18-65 9 4-71 18 17Q410 140 513 113zM772 113l-10 34q90 25 151 92l-14 20 64 10-3-71-18 17Q870 140 772 113z" />
      <path d="M405 640V420Q405 380 435 355L545 277Q560 268 572 284L586 284Q600 262 645 265L800 312Q878 335 878 400V590Q870 610 850 614V636Q855 655 840 670L750 750Q710 775 660 770L450 712Q405 690 405 640z" />
    </g>
    <g fill="#fff">
      <path d="M500 352L565 300Q590 283 625 288L765 320Q815 335 790 366L740 415Q700 445 640 438L530 410Q470 390 500 352z" />
      <path d="M438 520Q440 455 490 459L600 488Q665 510 668 580V680Q665 725 615 724L510 694Q440 670 438 600z" />
      <path d="M730 590Q730 530 765 495L825 425Q862 395 861 440V560Q862 610 825 645L765 700Q730 720 730 670z" />
      <circle cx="694" cy="490" r="41" />
      <ellipse cx="448" cy="419" rx="22" ry="42" transform="rotate(24 448 419)" />
      <ellipse cx="694" cy="735" rx="42" ry="17" transform="rotate(-8 694 735)" />
      <path d="M808 332Q860 370 861 402Q830 370 808 332zM573 415h9v72h-9zM668 572l62 18v5l-62-18zM566 280l16-4 6 12-18 8zM845 612h20v24l-14-4z" />
    </g>
    <g fontSize="66" fill="#000" fontFamily="Roboto, sans-serif">
      <text transform="translate(478 592) skewY(15)">Front</text>
      <text transform="translate(602 358) rotate(14) skewX(28)" fontSize="48">Top</text>
      <text transform="translate(754 612) rotate(-42) skewX(-30)" fontSize="50">Right</text>
    </g>
    <path d="M396 705V398" stroke="#2222e0" strokeWidth="6" />
    <path d="M396 705L702 793" stroke="#d80000" strokeWidth="5" />
    <path d="M396 705L454 656" stroke="#0a940a" strokeWidth="5" />
    <path d="M454 656L574 552" stroke="#b4e2b4" strokeWidth="5" />
    <g fontSize="74" fontFamily="Inter, sans-serif">
      <text x="372" y="382" fill="#0000d0">Z</text>
      <text x="574" y="556" fill="#b4e2b4">Y</text>
      <text x="722" y="832" fill="#d80000">X</text>
    </g>
  </CubeSvg>
)

const Brand = () => (
  <BrandLink href="#home" aria-label="onshape">
    <svg viewBox="0 0 40 44" width="40" height="44" aria-hidden="true">
      <path d="M20 1l17 10-4 3-13-7L7 14v12l-6-3V11zM39 13v20L21 43v-5l12-8V17zM1 26l6 4 11 7v6L1 33z" fill="#68bd49" />
      <path d="M20 12l10 6v12l-10 6-9-6V18z" fill="none" stroke="#68bd49" strokeWidth="3" />
      <path d="M20 18l5 3v6l-5 3-5-3v-6z" fill="none" stroke="#777" strokeWidth="3" />
    </svg>
    onshape
  </BrandLink>
)

const VersionGraph = ({ current, last }) => (
  <svg viewBox="0 0 290 100" width="290" height="100" aria-hidden="true">
    <path d={current ? 'M140 26V100' : last ? 'M140 0V26' : 'M140 0V100'} stroke={blue} strokeWidth="8" />
    {last && <path d="M140 26V42M128 42h24" stroke={blue} strokeWidth="4" />}
    {current
      ? <circle cx="140" cy="26" r="12" fill="#fff" stroke={blue} strokeWidth="4" />
      : <circle cx="140" cy="26" r="10" fill={blue} />}
  </svg>
)

const FeatureIcon = ({ icon, badge }) => (
  <IconSlot>
    <Icon name={icon} size={32} />
    {badge && (
      <Badge viewBox="0 0 24 24" width="24" height="24" aria-hidden="true">
        {badge === 'minus'
          ? <><circle cx="12" cy="12" r="12" fill={blue} /><path d="M6 12h12" stroke="#fff" strokeWidth="5" /></>
          : <><path d="M12 1l12 22H0z" fill="#fdb400" stroke="#fdb400" strokeLinejoin="round" /><path d="M12 8v8M12 18v3" stroke="#fff" strokeWidth="3" /></>}
      </Badge>
    )}
  </IconSlot>
)

const VersionsPanel = () => {
  const [query, setQuery] = useState('')
  return (
    <Versions>
      <PanelHeader>
        <PanelTitle>Versions and hi...</PanelTitle>
        <IconButton aria-label="Release"><Icon name="releaseLock" wide={4} /></IconButton>
        <IconButton aria-label="Create version"><Icon name="versionAdd" /></IconButton>
        <IconButton aria-label="Compare"><Icon name="compare" /></IconButton>
        <IconButton aria-label="Settings"><Icon name="tools" /></IconButton>
        <IconButton aria-label="Close"><Icon name="close" /></IconButton>
      </PanelHeader>
      <SearchBox>
        <SearchInput aria-label="Search history" placeholder="Search history" value={query} onChange={(e) => setQuery(e.target.value)} />
        <SearchMenu type="button" aria-label="Search options"><Caret /></SearchMenu>
        <SearchButton type="button" aria-label="Search"><Icon name="search" size={34} /></SearchButton>
      </SearchBox>
      <Toggles>
        <Toggle aria-label="Show branches"><Icon name="branch" /></Toggle>
        <Toggle aria-label="Show automatic versions"><Icon name="auto" /></Toggle>
      </Toggles>
      <HistoryTable>
        <colgroup><col width="290" /><col width="155" /><col /></colgroup>
        <thead><tr><th aria-label="Graph" /><th>Name</th><th>Modified</th></tr></thead>
        <tbody>
          {versions.map((v) => (
            <HistoryRow key={v.name} $current={v.current}>
              <td><VersionGraph current={v.current} last={v.last} /></td>
              <td>
                <Line>{v.current ? <Tag>{v.name}</Tag> : <b>{v.name}</b>}</Line>
                {!v.last && <ShowButton><Chevron color="#666" turn={-90} />Show c...</ShowButton>}
              </td>
              <td><Line>Jeff Butts</Line><Line>{v.time}</Line></td>
            </HistoryRow>
          ))}
        </tbody>
      </HistoryTable>
      <Legend>
        <LegendRow>
          <LegendItem><Icon name="workspace" /><Tag>Workspace</Tag></LegendItem>
          <LegendItem><Icon name="version" />Version</LegendItem>
        </LegendRow>
        <LegendRow><LegendItem $plain><Icon name="change" />Change</LegendItem></LegendRow>
        <LegendRow>
          <LegendItem><Icon name="candidate" wide={12} />Release candidate</LegendItem>
          <LegendItem><Icon name="release" />Release</LegendItem>
        </LegendRow>
        <LegendRow><LegendItem><Icon name="obsolete" wide={4} />Contains obsoletion</LegendItem></LegendRow>
        <LegendRow><LegendItem><Icon name="auto" />Automatic version</LegendItem></LegendRow>
      </Legend>
      <UpgradeButton><Icon name="lock" />Upgrade</UpgradeButton>
      <HintBar>Right-click on a row to perform actions<Icon name="helpDim" size={26} /></HintBar>
    </Versions>
  )
}

const FeaturePanel = () => (
  <Features>
    <FeatureList>
      <FilterRow>
        <Icon name="filter" size={32} />
        <FilterInput aria-label="Filter" placeholder="Filter by name or type" />
      </FilterRow>
      <FeatureHeader>
        <Icon name="rollback" size={24} />
        <FeatureTitle>Features ...</FeatureTitle>
        <IconButton aria-label="Add folder"><Icon name="folderAdd" /></IconButton>
        <IconButton aria-label="Suspend"><Icon name="pause" /></IconButton>
        <IconButton aria-label="Regeneration times"><Icon name="timer" /></IconButton>
      </FeatureHeader>
      <TreeRow $group><Chevron color="#666" size={24} />Default geometry</TreeRow>
      <TreeChildren>
        {geometry.map(([name, icon]) => (
          <TreeRow key={name} $child $color="#999"><IconSlot><Icon name={icon} size={32} /></IconSlot>{name}</TreeRow>
        ))}
      </TreeChildren>
      {features.map((f) => (
        <TreeRow key={f.name} $color={f.color}><FeatureIcon icon={f.icon} badge={f.badge} />{f.name}</TreeRow>
      ))}
      <RollbackBar />
    </FeatureList>
    <PartList>
      <TreeRow $group><Chevron color="#666" size={24} />Parts (1)</TreeRow>
      <TreeRow $nested><IconSlot><Icon name="part" size={32} /></IconSlot>Part 1</TreeRow>
    </PartList>
  </Features>
)

const App = () => {
  const [active, setActive] = useState(0)
  return (
    <>
      <GlobalStyle />
      <Page>
        <Header>
          <Brand />
          <MenuButton aria-label="Menu"><span /><span /><span /></MenuButton>
          <DocTitle>HomePod mini - Insert for Shelf</DocTitle>
          <Branch>Main</Branch>
          <IconButton aria-label="Copy link"><Icon name="link" size={32} /></IconButton>
          <Stats>
            <Icon name="globe" />
            <Stat><Icon name="copy" />0</Stat>
            <Stat><Icon name="commits" />3</Stat>
            <Stat><Icon name="like" />0</Stat>
          </Stats>
          <Account>
            <Apps>
              <IconButton aria-label="Apps"><Icon name="apps" /></IconButton>
              <IconButton aria-label="Learning"><Icon name="mind" /></IconButton>
            </Apps>
            <ShareButton>Share</ShareButton>
            <MenuTrigger aria-label="Help"><Icon name="help" /><Caret /></MenuTrigger>
            <MenuTrigger>
              <svg viewBox="0 0 48 48" width="48" height="48" aria-hidden="true"><circle cx="24" cy="24" r="24" fill={blue} /><ellipse cx="24" cy="20" rx="12" ry="13" fill="#fff" /><path d="M6 42q3-11 12-12h12q9 1 12 12-8 6-18 6T6 42z" fill="#fff" /></svg>
              Jeff Butts<Caret />
            </MenuTrigger>
          </Account>
        </Header>
        <Body>
          <Rail>
            <RailButton $active aria-label="Versions and history"><Icon name="historyTree" /></RailButton>
            <RailButton aria-label="Create version"><Icon name="versionAdd" /></RailButton>
            <RailButton aria-label="Comments"><Icon name="comment" /></RailButton>
            <RailButton aria-label="Where used"><Icon name="cubeHelp" /></RailButton>
            <RailButton aria-label="Performance"><Icon name="speed" /></RailButton>
            <RailButton $bottom aria-label="Search document"><Icon name="layers" /></RailButton>
          </Rail>
          <VersionsPanel />
          <Workspace>
            <Toolbar>
              <ToolButton aria-label="Undo"><Icon name="undo" /></ToolButton>
              <ToolButton aria-label="Redo"><Icon name="redo" /></ToolButton>
              <Separator />
              <SketchButton><Icon name="sketch" />Sketch</SketchButton>
              <Separator />
              {tools.map((t, i) => (t ? (
                <React.Fragment key={t[0]}>
                  <ToolButton aria-label={t[0]}><Icon name={t[0]} /></ToolButton>
                  {t[1] && <MoreButton aria-label={`${t[0]} menu`}><Chevron /></MoreButton>}
                </React.Fragment>
              ) : <Separator key={i} />))}
              <SearchTools>Search tools...<Keys><kbd>alt/⌥</kbd><kbd>c</kbd></Keys></SearchTools>
            </Toolbar>
            <Stage>
              <FeaturePanel />
              <Canvas>
                <Scene />
                <ListHandle aria-label="Feature list"><Icon name="list" /></ListHandle>
                <ViewCube />
                <DisplayMenu aria-label="Display mode"><Icon name="shaded" /><Caret /></DisplayMenu>
                <SidePalette>
                  {sideTools.map(([label, icon]) => <SideButton key={label} aria-label={label}><Icon name={icon} size={38} /></SideButton>)}
                </SidePalette>
                <MeasureBar>
                  <IconButton aria-label="Measure"><Icon name="tape" /></IconButton>
                  <IconButton aria-label="Angle"><Icon name="protractor" size={40} /></IconButton>
                  <IconButton aria-label="Mass properties"><Icon name="scale" size={34} /></IconButton>
                </MeasureBar>
              </Canvas>
            </Stage>
            <TabBar>
              <AddTab aria-label="Add tab">
                <svg viewBox="0 0 30 30" width="30" height="30" aria-hidden="true"><path d="M15 0v30M0 15h30" stroke="#555" strokeWidth="5" /></svg>
              </AddTab>
              {tabs.map(([name, icon], i) => (
                <Tab key={name} $active={i === active} onClick={() => setActive(i)}><Icon name={icon} />{name}</Tab>
              ))}
            </TabBar>
          </Workspace>
        </Body>
        <Watermark viewBox="0 0 434 172" width="434" height="172" role="img" aria-label="XDA">
          <path d="M82 38h31v12H95v44h18v37L97 106H82z" fill="#ee9ab0" />
          <path d="M126 38h31v68h-31V94h18V50h-18z" fill="#92d2f3" />
          <text x="172" y="106" fontSize="94" fontWeight="700" fill="#fff">XDA</text>
        </Watermark>
      </Page>
    </>
  )
}

export default App

const GlobalStyle = createGlobalStyle`
  * { box-sizing: border-box; }
  body {
    margin: 0;
    background: linear-gradient(to right, #aaa 50%, #5c4174 50%);
    font-family: Roboto, "Open Sans", sans-serif;
    font-size: 27px;
    line-height: 32px;
    color: ${ink};
  }
  button, input { font: inherit; color: inherit; }
  button { background: none; border: 0; padding: 0; cursor: pointer; }
  b, th { font-weight: 600; }
`

const Drawing = styled.svg`
  flex: none;
  display: block;
  overflow: visible;
  fill: none;
  stroke: ${ink};
  stroke-width: 2;
  transform: ${(p) => (p.$turn ? `rotate(${p.$turn}deg)` : 'none')};
`

const Page = styled.div`
  position: relative;
  display: flex;
  flex-direction: column;
  min-height: 100vh;
  background: #fff;
  border-radius: 0 0 28px 28px;
  overflow: hidden;
`

const Header = styled.header`
  display: flex;
  align-items: center;
  height: 80px;
  padding: 0 12px 0 8px;
  background: #fafafa;
`

const BrandLink = styled.a`
  display: flex;
  align-items: center;
  gap: 14px;
  width: 218px;
  color: #666;
  font: 300 38px/44px Lato, sans-serif;
  text-decoration: none;
`

const MenuButton = styled.button`
  display: grid;
  gap: 6px;
  width: 32px;
  margin: 6px 24px 0 0;
  span { height: 6px; background: ${ink}; }
`

const DocTitle = styled.h1`
  margin: 6px 18px 0 0;
  font-size: 45px;
  line-height: 52px;
  font-weight: 600;
`

const Branch = styled.span`
  margin: 12px 22px 0 0;
  color: #999;
  font-size: 31px;
`

const IconButton = styled.button`
  display: grid;
  place-items: center;
`

const Stats = styled.div`
  display: flex;
  align-items: center;
  gap: 29px;
  margin-left: 60px;
`

const Stat = styled.span`
  display: flex;
  align-items: center;
  gap: 14px;
  font-size: 28px;
  &:first-of-type { margin-left: 18px; }
`

const Account = styled.div`
  display: flex;
  align-items: center;
  gap: 23px;
  margin-left: auto;
`

const Apps = styled.div`
  display: flex;
  gap: 28px;
  margin-top: 6px;
`

const ShareButton = styled.button`
  height: 66px;
  padding: 0 24px;
  border-radius: 8px;
  background: ${blue};
  color: #fff;
  font-size: 28px;
  font-weight: 500;
`

const MenuTrigger = styled.button`
  display: flex;
  align-items: center;
  gap: 13px;
  font-size: 28px;
`

const Body = styled.div`
  display: flex;
  flex: 1;
`

const Rail = styled.nav`
  display: flex;
  flex-direction: column;
  flex: none;
  width: 80px;
  background: #fafafa;
  border-top: 2px solid #d6d6d6;
  border-right: 2px solid #d6d6d6;
`

const RailButton = styled.button`
  display: grid;
  place-items: center;
  height: ${(p) => (p.$bottom ? 56 : 70)}px;
  margin-top: ${(p) => (p.$bottom ? 'auto' : 0)};
  box-shadow: ${(p) => (p.$active ? `inset 6px 0 ${blue}` : 'none')};
`

const Versions = styled.aside`
  display: flex;
  flex-direction: column;
  flex: none;
  width: 602px;
  border-top: 2px solid #d6d6d6;
  border-right: 2px solid #d6d6d6;
`

const PanelHeader = styled.div`
  display: flex;
  align-items: center;
  justify-content: space-between;
  height: 72px;
  padding: 0 12px 0 10px;
  border-bottom: 2px solid #ccc;
`

const PanelTitle = styled.h2`
  margin: 2px 0 0;
  font-size: 29px;
  font-weight: 600;
`

const SearchBox = styled.form`
  display: flex;
  align-items: center;
  height: 56px;
  margin: 12px 20px 14px;
  border: 2px solid #acacac;
  border-radius: 6px;
`

const SearchInput = styled.input`
  flex: 1;
  min-width: 0;
  padding: 4px 0 0 24px;
  border: 0;
  outline: 0;
  background: none;
  font-style: italic;
  &::placeholder { color: #666; opacity: 1; }
`

const SearchMenu = styled.button`
  padding: 0 18px;
`

const SearchButton = styled.button`
  display: grid;
  place-items: center;
  width: 60px;
  height: 52px;
  border-left: 2px solid #acacac;
`

const Toggles = styled.div`
  display: flex;
  gap: 12px;
  padding-left: 26px;
`

const Toggle = styled.button`
  display: grid;
  place-items: center;
  width: 60px;
  height: 60px;
  border-radius: 8px;
  background: #e9e9e9;
  box-shadow: inset 0 2px 2px #bbb;
`

const HistoryTable = styled.table`
  width: 100%;
  table-layout: fixed;
  border-collapse: collapse;
  th {
    height: 77px;
    padding: 0 0 9px;
    border-bottom: 2px solid #ccd8e2;
    text-align: left;
    vertical-align: bottom;
    font-size: 28px;
  }
`

const HistoryRow = styled.tr`
  height: 100px;
  background: ${(p) => (p.$current ? '#b1dcf6' : 'none')};
  color: #666;
  td { padding: 0; vertical-align: top; }
  td + td { padding-top: 11px; }
  b { color: ${ink}; }
  svg { display: block; }
`

const Line = styled.div`
  display: flex;
  align-items: center;
  height: 42px;
  white-space: nowrap;
`

const Tag = styled.span`
  height: 42px;
  padding: 0 7px;
  border: 2px solid ${blue};
  border-radius: 6px;
  background: #d0dae6;
  color: ${ink};
  font-weight: 600;
  line-height: 40px;
`

const ShowButton = styled.button`
  display: flex;
  align-items: center;
  gap: 7px;
  height: 42px;
  white-space: nowrap;
`

const Legend = styled.div`
  margin-top: auto;
  padding-left: 92px;
  font-size: 28px;
`

const LegendRow = styled.div`
  display: flex;
  align-items: center;
  gap: 50px;
  height: 65px;
`

const LegendItem = styled.span`
  display: flex;
  align-items: center;
  gap: 8px;
  white-space: nowrap;
  color: ${(p) => (p.$plain ? '#666' : ink)};
  font-weight: ${(p) => (p.$plain ? 400 : 600)};
`

const UpgradeButton = styled.button`
  display: flex;
  align-items: center;
  align-self: center;
  gap: 4px;
  height: 54px;
  margin: 41px 0 35px 40px;
  padding: 2px 12px 0;
  border: 2px solid #4479bb;
  border-radius: 20px;
  font-size: 29px;
`

const HintBar = styled.footer`
  display: flex;
  align-items: center;
  justify-content: space-between;
  height: 62px;
  padding: 0 16px 0 10px;
  border-top: 2px solid #ccc;
  border-bottom: 2px solid #ccc;
  background: #eee;
  color: #666;
  font-size: 22px;
`

const Workspace = styled.main`
  display: flex;
  flex-direction: column;
  flex: 1;
  min-width: 0;
`

const Toolbar = styled.div`
  display: flex;
  align-items: center;
  height: 72px;
  padding: 1px 0 0 2px;
`

const ToolButton = styled.button`
  display: grid;
  place-items: center;
  flex: none;
  width: 68px;
  height: 60px;
`

const MoreButton = styled.button`
  display: grid;
  place-items: center;
  flex: none;
  width: 36px;
  height: 60px;
  padding-right: 4px;
`

const Separator = styled.div`
  flex: none;
  width: 8px;
  height: 52px;
  border: solid #fff;
  border-width: 0 3px 0 2px;
  background: #d6d6d6;
`

const SketchButton = styled.button`
  display: flex;
  align-items: center;
  justify-content: center;
  gap: 11px;
  flex: none;
  width: 169px;
`

const SearchTools = styled.button`
  display: flex;
  align-items: center;
  flex: none;
  gap: 8px;
  height: 64px;
  margin-left: 22px;
  padding: 0 20px;
  border-radius: 8px;
  background: #eee;
`

const Keys = styled.span`
  display: flex;
  gap: 2px;
  kbd {
    padding: 0 6px;
    border: 2px solid #aaa;
    border-bottom-width: 4px;
    border-radius: 4px;
    font: inherit;
    font-size: 22px;
  }
`

const Stage = styled.div`
  display: flex;
  flex: 1;
`

const Features = styled.section`
  display: flex;
  flex-direction: column;
  flex: none;
  width: 412px;
  border: 2px solid #ccc;
  border-left: 0;
`

const FeatureList = styled.div`
  flex: 65 1 0;
`

const FilterRow = styled.div`
  display: flex;
  align-items: center;
  gap: 24px;
  padding: 14px 15px 0 21px;
`

const FilterInput = styled.input`
  flex: 1;
  min-width: 0;
  height: 60px;
  padding: 3px 12px 0;
  border: 2px solid #acacac;
  border-radius: 6px;
  font-style: italic;
  &::placeholder { color: #666; opacity: 1; }
`

const FeatureHeader = styled.div`
  display: flex;
  align-items: center;
  gap: 24px;
  height: 60px;
  padding: 2px 0 0 15px;
`

const FeatureTitle = styled.h2`
  margin: 0 -8px 0 0;
  font-size: 27px;
  font-weight: 600;
`

const TreeRow = styled.div`
  display: flex;
  align-items: center;
  gap: ${(p) => (p.$group ? 14 : 5)}px;
  height: 52px;
  padding-left: ${(p) => (p.$child ? 29 : p.$nested ? 49 : p.$group ? 8 : 11)}px;
  color: ${(p) => p.$color || ink};
`

const TreeChildren = styled.div`
  position: relative;
  margin-left: 18px;
  border-left: 2px solid #d6d6d6;
  &::after {
    content: '';
    position: absolute;
    left: -10px;
    bottom: 0;
    width: 19px;
    height: 2px;
    background: #d6d6d6;
  }
`

const IconSlot = styled.span`
  position: relative;
  width: 36px;
`

const Badge = styled.svg`
  position: absolute;
  right: -3px;
  bottom: -8px;
`

const RollbackBar = styled.div`
  height: 14px;
  margin: 19px 19px 0 10px;
  background: #acacac;
`

const PartList = styled.div`
  flex: 35 1 0;
  margin-right: 10px;
  border-top: 2px solid #d6d6d6;
`

const Canvas = styled.div`
  position: relative;
  flex: 1;
  min-width: 0;
`

const SceneSvg = styled.svg`
  position: absolute;
  inset: 0;
  width: 100%;
  height: 100%;
`

const ListHandle = styled.button`
  position: absolute;
  left: -2px;
  top: 959px;
  display: grid;
  place-items: center;
  width: 67px;
  height: 68px;
  border: 2px solid #acacac;
  border-left: 0;
  background: #fff;
`

const CubeSvg = styled.svg`
  position: absolute;
  top: 8px;
  right: 0;
`

const DisplayMenu = styled.button`
  position: absolute;
  top: 294px;
  right: 40px;
  display: flex;
  align-items: center;
  gap: 16px;
`

const SidePalette = styled.div`
  position: absolute;
  top: 860px;
  right: 0;
  width: 64px;
  border: 2px solid #acacac;
  border-width: 2px 0 0 2px;
`

const SideButton = styled.button`
  display: grid;
  place-items: center;
  width: 62px;
  height: 66px;
  padding-top: 2px;
  border-bottom: 2px solid #acacac;
  background: #fff;
`

const MeasureBar = styled.div`
  position: absolute;
  right: 24px;
  bottom: 12px;
  display: flex;
  gap: 32px;
`

const TabBar = styled.div`
  display: flex;
  gap: 4px;
  height: 60px;
  background: #d6d6d6;
`

const AddTab = styled.button`
  display: grid;
  place-items: center;
  width: 74px;
  padding-right: 8px;
  height: 58px;
`

const Tab = styled.button`
  display: flex;
  align-items: center;
  gap: 7px;
  width: 400px;
  height: ${(p) => (p.$active ? 56 : 54)}px;
  padding: 3px 24px 0;
  border-radius: 0 0 10px 10px;
  background: ${(p) => (p.$active ? '#fff' : '#eaeaea')};
  box-shadow: ${(p) => (p.$active ? `inset 0 -5px ${blue}` : '0 2px 2px #bbb')};
  color: ${(p) => (p.$active ? ink : '#666')};
`

const Watermark = styled.svg`
  position: absolute;
  right: 0;
  bottom: 0;
  opacity: .85;
  pointer-events: none;
  font-family: "DejaVu Sans", sans-serif;
  filter: drop-shadow(-5px 5px 7px rgba(0, 0, 0, .6));
`
